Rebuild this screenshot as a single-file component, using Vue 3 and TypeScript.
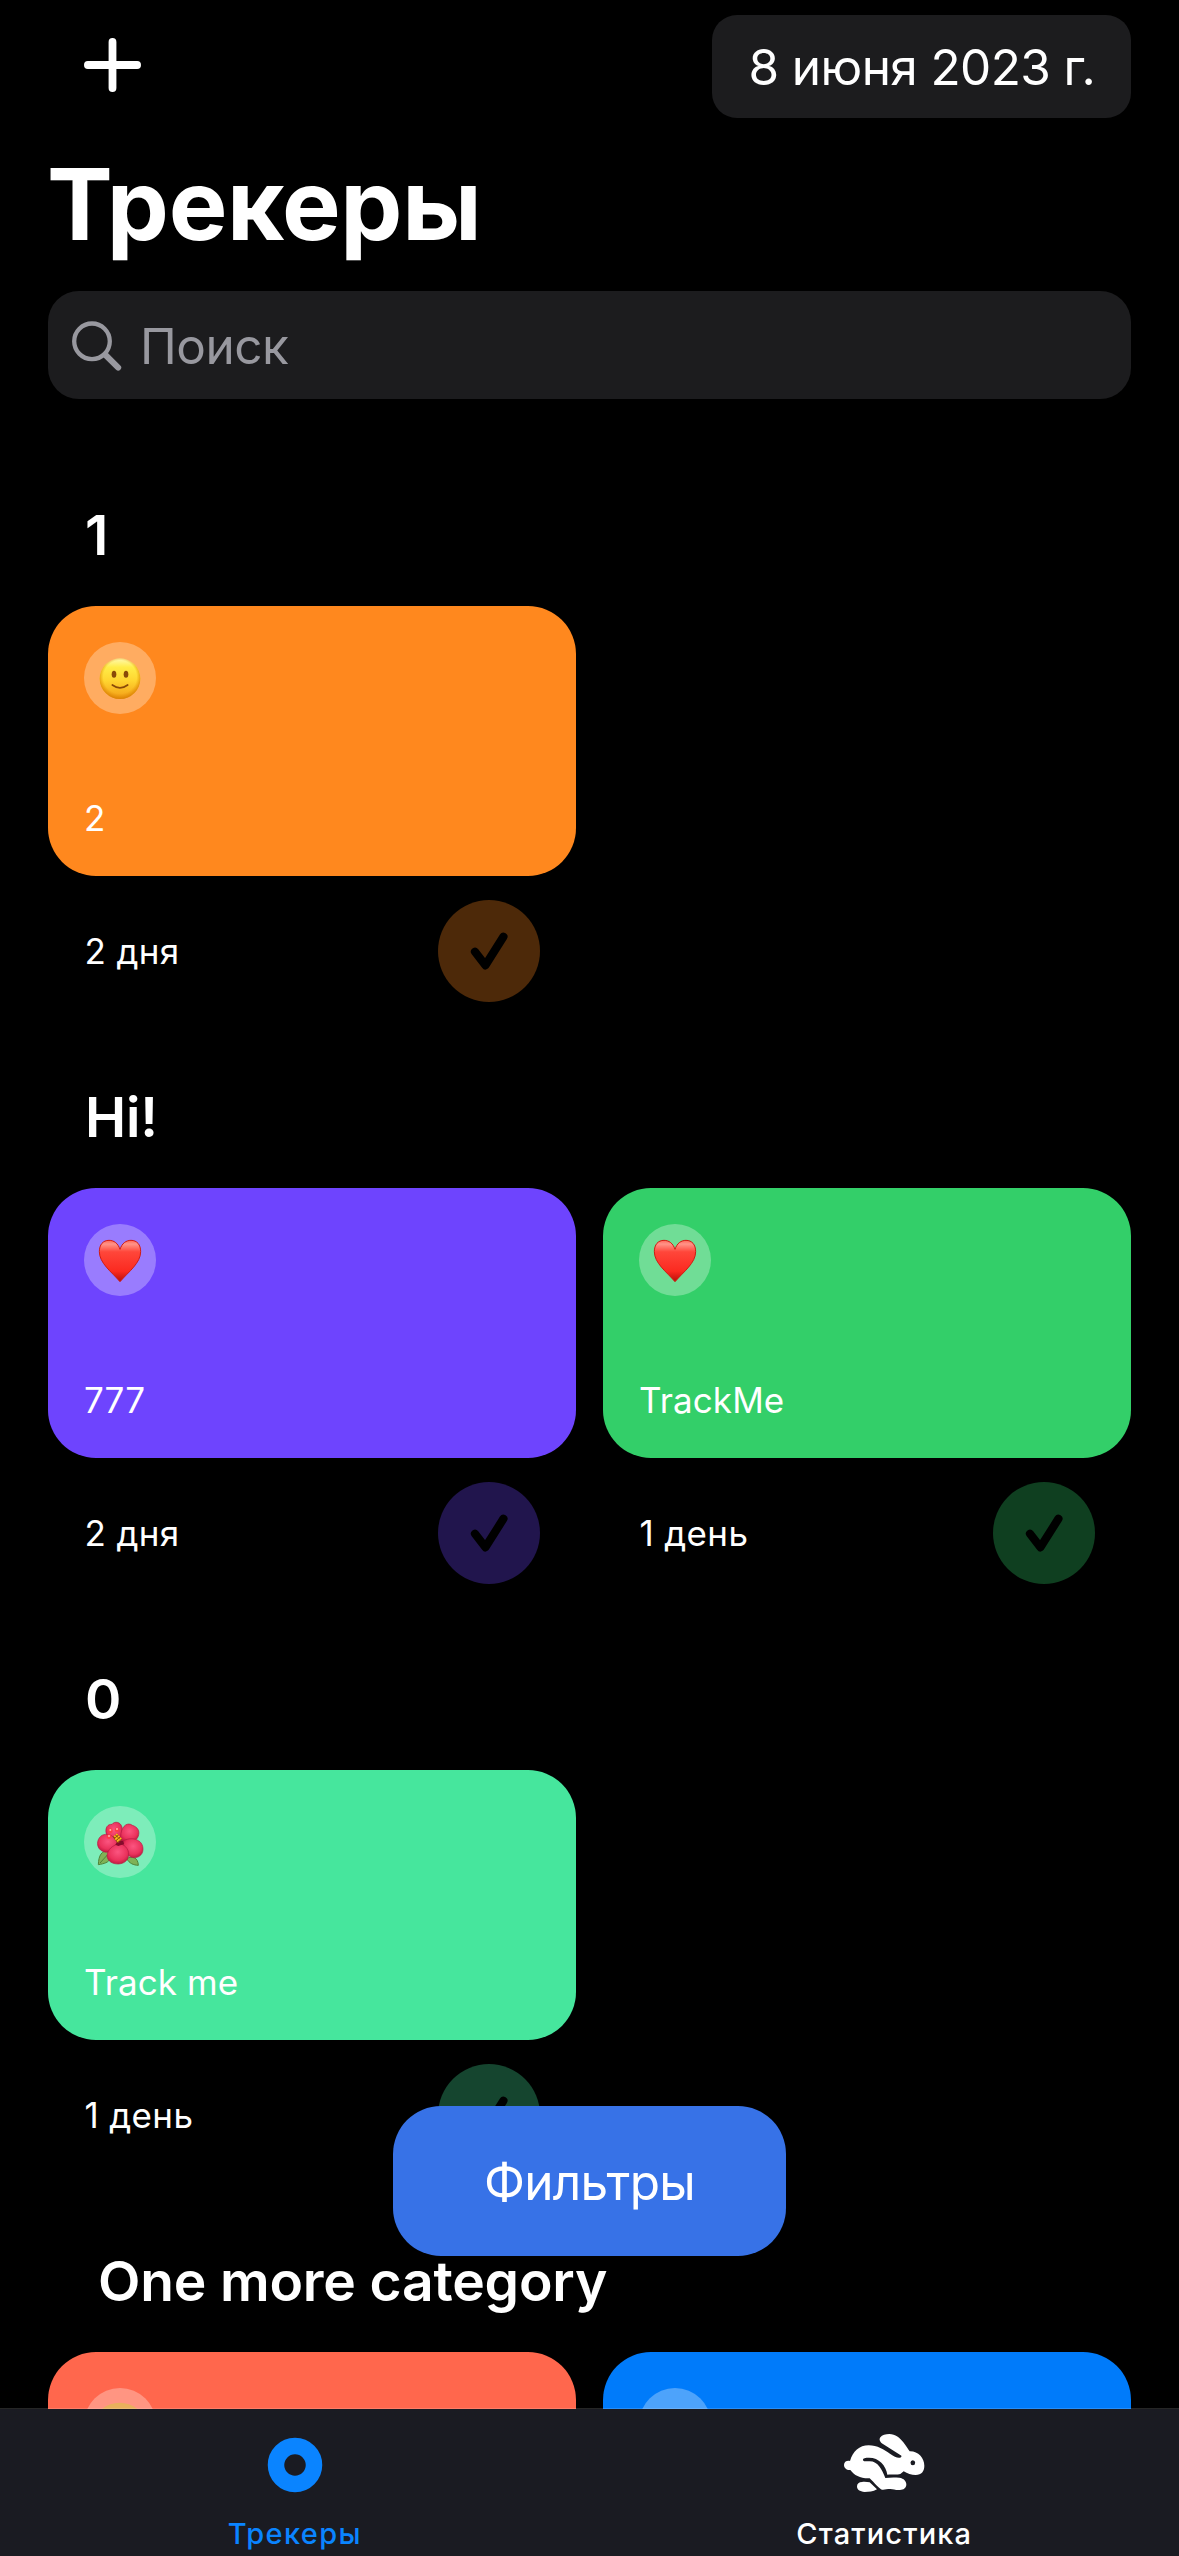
<script setup lang="ts">
type Emoji = 'smile' | 'heart' | 'flower' | 'fur' | 'none'

interface Tracker {
  name: string
  days: string
  color: string
  emoji: Emoji
}

interface Category {
  title: string
  indent?: boolean
  trackers: Tracker[]
}

const categories: Category[] = [
  { title: '1', trackers: [{ name: '2', days: '2 дня', color: '#ff881e', emoji: 'smile' }] },
  {
    title: 'Hi!',
    trackers: [
      { name: '777', days: '2 дня', color: '#6e44fe', emoji: 'heart' },
      { name: 'TrackMe', days: '1 день', color: '#33cf69', emoji: 'heart' },
    ],
  },
  { title: '0', trackers: [{ name: 'Track me', days: '1 день', color: '#46e69d', emoji: 'flower' }] },
  {
    title: 'One more category',
    indent: true,
    trackers: [
      { name: '', days: '', color: '#ff674d', emoji: 'fur' },
      { name: '', days: '', color: '#007bfa', emoji: 'none' },
    ],
  },
]
</script>

<template>
  <div class="screen">
    <svg class="defs" width="0" height="0" aria-hidden="true">
      <defs>
        <linearGradient id="face" x1="0" y1="0" x2="0" y2="1">
          <stop offset="0" stop-color="#fff9b0" />
          <stop offset=".22" stop-color="#ffec48" />
          <stop offset=".55" stop-color="#ffd530" />
          <stop offset="1" stop-color="#f39c16" />
        </linearGradient>
        <radialGradient id="rim" cx=".5" cy=".46" r=".55">
          <stop offset=".74" stop-color="#e08a00" stop-opacity="0" />
          <stop offset="1" stop-color="#d67a00" stop-opacity=".9" />
        </radialGradient>
        <linearGradient id="heart" x1="0" y1="0" x2="0" y2="1">
          <stop offset="0" stop-color="#ff6658" />
          <stop offset=".09" stop-color="#ff9488" />
          <stop offset=".28" stop-color="#ff463a" />
          <stop offset=".75" stop-color="#fb2a20" />
          <stop offset="1" stop-color="#b80d08" />
        </linearGradient>
        <radialGradient id="petal" cx=".5" cy=".4" r=".6">
          <stop offset="0" stop-color="#fb5580" />
          <stop offset=".7" stop-color="#ea325c" />
          <stop offset="1" stop-color="#c41a42" />
        </radialGradient>
      </defs>
    </svg>

    <main class="content">
      <header class="bar">
        <svg class="plus" viewBox="0 0 57 54" fill="none" stroke="#fff" stroke-width="7.8" stroke-linecap="round">
          <path d="M28.5 3.9V50.1M3.9 27H53.1" />
        </svg>
        <div class="date">8 июня 2023 г.</div>
      </header>

      <h1 class="title">Трекеры</h1>

      <div class="search">
        <svg class="lens" viewBox="0 0 50 50" fill="none" stroke="#98989f" stroke-linecap="round">
          <circle cx="20" cy="20.3" r="17.8" stroke-width="4.3" />
          <path d="M33.5 34L46.2 46.6" stroke-width="6" />
        </svg>
        <span>Поиск</span>
      </div>

      <section v-for="cat in categories" :key="cat.title" class="category">
        <h2 class="heading" :class="{ indent: cat.indent }">{{ cat.title }}</h2>
        <div class="grid">
          <article v-for="(t, i) in cat.trackers" :key="i" class="tracker">
            <div class="card" :style="{ background: t.color }">
              <svg class="emoji" viewBox="0 0 216 216">
                <circle cx="108" cy="108" r="108" fill="#fff" fill-opacity=".3" />
                <g v-if="t.emoji === 'smile'">
                  <circle cx="108" cy="110" r="61" fill="url(#face)" />
                  <circle cx="108" cy="110" r="61" fill="url(#rim)" />
                  <ellipse cx="90" cy="97" rx="7" ry="10.5" fill="#8a4a08" />
                  <ellipse cx="126" cy="97" rx="7" ry="10.5" fill="#8a4a08" />
                  <path d="M85 129Q108 146 131 129" fill="none" stroke="#8a4a08" stroke-width="5" stroke-linecap="round" />
                </g>
                <path
                  v-else-if="t.emoji === 'heart'"
                  d="M108 76C102 58 90 49 75 49C57 49 46 62 46 83C46 117 82 143 108 173C134 143 170 117 170 83C170 62 159 49 141 49C126 49 114 58 108 76Z"
                  fill="url(#heart)"
                  stroke="#cf1b12"
                  stroke-width="3"
                />
                <g v-else-if="t.emoji === 'flower'">
                  <path d="M75 134C52 134 44 148 43 176C60 173 74 170 79 157Z" fill="#7fb257" stroke="#4f8238" stroke-width="3" />
                  <path d="M48 171L70 147" stroke="#4f8238" stroke-width="3" />
                  <path d="M128 158C145 149 162 154 163 178C148 177 137 173 128 158Z" fill="#7fb257" stroke="#4f8238" stroke-width="3" />
                  <path d="M70 75L140 70L160 130L100 160L62 120Z" fill="#a3143a" />
                  <g fill="url(#petal)" stroke="#b31a42" stroke-width="2">
                    <path d="M67 84C62 64 72 54 84 55C92 44 111 48 114 64L112 104L90 106Z" />
                    <path d="M111 82C115 58 132 48 145 58C161 63 168 75 163 90C158 106 139 110 121 107L108 102Z" />
                    <path d="M43 101C50 84 67 82 82 89C93 95 101 105 104 113C96 132 78 141 62 138C42 133 37 115 43 101Z" />
                    <path d="M118 104C136 95 155 98 163 104C177 111 180 130 174 142C166 156 148 159 136 150C124 140 117 122 118 104Z" />
                    <path d="M102 114C119 111 136 129 134 147C132 165 119 173 103 174C85 174 71 166 69 150C71 129 86 119 102 114Z" />
                  </g>
                  <path d="M101 104L117 105L120 114L103 120L94 116Z" fill="#850a2b" />
                  <path d="M93 88L107 106" stroke="#8e4a12" stroke-width="17" />
                  <path d="M91 89L109 105M97 84L113 101M94 97L105 109" stroke="#ffc21a" stroke-width="5" stroke-dasharray="5 3" />
                  <g fill="#ff3d46">
                    <circle cx="79" cy="74" r="7" /><circle cx="99" cy="71" r="6.5" /><circle cx="75" cy="92" r="7" />
                  </g>
                  <g fill="#ffb0b0">
                    <circle cx="79" cy="72" r="3" /><circle cx="99" cy="69" r="3" /><circle cx="75" cy="90" r="3" />
                  </g>
                </g>
                <ellipse v-else-if="t.emoji === 'fur'" cx="107" cy="106" rx="74" ry="62" fill="#e9b05c" />
              </svg>
              <div class="name">{{ t.name }}</div>
            </div>
            <div class="footer">
              <span>{{ t.days }}</span>
              <svg class="done" viewBox="0 0 102 102">
                <circle cx="51" cy="51" r="51" :fill="t.color" fill-opacity=".3" />
                <path d="M37 51.8L47.4 65.3L65.4 36.8" fill="none" stroke="#000" stroke-width="8.2" stroke-linecap="round" stroke-linejoin="round" />
              </svg>
            </div>
          </article>
        </div>
      </section>
    </main>

    <button class="filters">Фильтры</button>

    <nav class="tabs">
      <div class="tab active">
        <svg class="tab-icon" viewBox="0 0 84 62">
          <circle cx="42" cy="33" r="19" fill="none" stroke="#0a84ff" stroke-width="16.5" />
        </svg>
        <span>Трекеры</span>
      </div>
      <div class="tab">
        <svg class="tab-icon" viewBox="66 66 252 186">
          <path
            fill="#fff"
            d="M90 153C98 124 118 106 146 106C172 106 192 119 211 132C222 139 232 145 240 143C245 142 246 138 242 136L190 103C180 97 176 89 181 82C186 75 197 72 208 72C226 72 240 84 250 97C258 107 263 116 269 124C294 123 313 144 313 167C313 184 305 194 287 195C274 195 262 191 251 184L241 192C228 195 215 192 202 194C198 166 177 143 147 143C136 143 129 144 129 149C129 155 138 154 149 154C174 154 186 179 196 204C209 202 224 202 238 203C252 205 259 214 259 223C259 235 250 240 240 240C226 241 221 237 211 237C200 237 194 240 186 239C179 238 163 218 149 205C121 206 103 196 91 180C80 181 72 174 72 165C72 156 80 151 90 153Z"
          />
          <path fill="#fff" d="M126 216C134 215 142 216 149 217L171 238C159 245 147 246 134 246C119 245 111 239 111 229C111 221 117 216 126 216Z" />
          <ellipse cx="278.5" cy="158" rx="7" ry="7.5" fill="#1a1b22" />
        </svg>
        <span>Статистика</span>
      </div>
    </nav>
  </div>
</template>

<style>
body {
  background: #000;
}
</style>

<style scoped>
.screen {
  position: relative;
  display: flex;
  flex-direction: column;
  width: 1179px;
  height: 2556px;
  overflow: hidden;
  background: #000;
  color: #fff;
  font-family: Inter, 'Noto Sans', sans-serif;
}
.defs {
  position: absolute;
}
.content {
  height: 2409px;
  flex: none;
  box-sizing: border-box;
  padding: 15px 48px 0;
  overflow: hidden;
}
.bar {
  display: flex;
  align-items: center;
  justify-content: space-between;
  height: 103px;
}
.plus {
  width: 57px;
  height: 54px;
  margin: 0 0 3px 36px;
}
.date {
  box-sizing: border-box;
  width: 419px;
  height: 103px;
  padding-left: 36.5px;
  padding-top: 1px;
  border-radius: 25px;
  background: #1c1c1e;
  font-size: 49.5px;
  line-height: 103px;
  letter-spacing: -0.6px;
  white-space: nowrap;
}
.title {
  margin: 0 0 0 -1px;
  font-size: 98.6px;
  font-weight: 700;
  line-height: 173px;
  letter-spacing: -0.35px;
}
.search {
  display: flex;
  align-items: center;
  gap: 18px;
  height: 108px;
  box-sizing: border-box;
  padding: 2px 0 0 24px;
  margin-bottom: 65px;
  border-radius: 31px;
  background: #1c1c1e;
  color: #98989f;
  font-size: 49.5px;
  letter-spacing: -0.5px;
}
.lens {
  width: 50px;
  height: 50px;
}
.category {
  padding-bottom: 44px;
}
.heading {
  margin: 0;
  padding-left: 37px;
  font-size: 55.2px;
  font-weight: 600;
  line-height: 142px;
  letter-spacing: -0.2px;
}
.heading.indent {
  padding-left: 50px;
}
.grid {
  display: grid;
  grid-template-columns: 1fr 1fr;
  column-gap: 27px;
}
.card {
  display: flex;
  flex-direction: column;
  justify-content: space-between;
  height: 270px;
  box-sizing: border-box;
  padding: 36px 36px 31px;
  border-radius: 48px;
}
.emoji {
  width: 72px;
  height: 72px;
}
.name {
  font-size: 35px;
  line-height: 54px;
  letter-spacing: 0.1px;
}
.footer {
  display: flex;
  align-items: center;
  justify-content: space-between;
  height: 102px;
  padding: 24px 36px 0 36.5px;
  font-size: 35px;
  letter-spacing: 0.35px;
}
.done {
  width: 102px;
  height: 102px;
}
.filters {
  position: absolute;
  left: 393px;
  top: 2106px;
  width: 393px;
  height: 150px;
  padding: 1px 0 0;
  border: 0;
  border-radius: 48px;
  background: #3772e7;
  color: #fff;
  font: 400 49.5px Inter, 'Noto Sans', sans-serif;
  letter-spacing: -0.7px;
}
.tabs {
  position: relative;
  display: flex;
  flex: none;
  height: 147px;
  margin-top: -1px;
  border-top: 1px solid rgba(255, 255, 255, 0.15);
  background: #1a1b22;
  background-clip: padding-box;
}
.tab {
  flex: 1;
  display: flex;
  flex-direction: column;
  align-items: center;
  padding-top: 23px;
  font-size: 29px;
  font-weight: 500;
  line-height: 40px;
  letter-spacing: 1.15px;
}
.tab.active {
  color: #0a84ff;
  letter-spacing: 1.35px;
}
.tab-icon {
  width: 84px;
  height: 62px;
  margin-bottom: 20px;
}
</style>
